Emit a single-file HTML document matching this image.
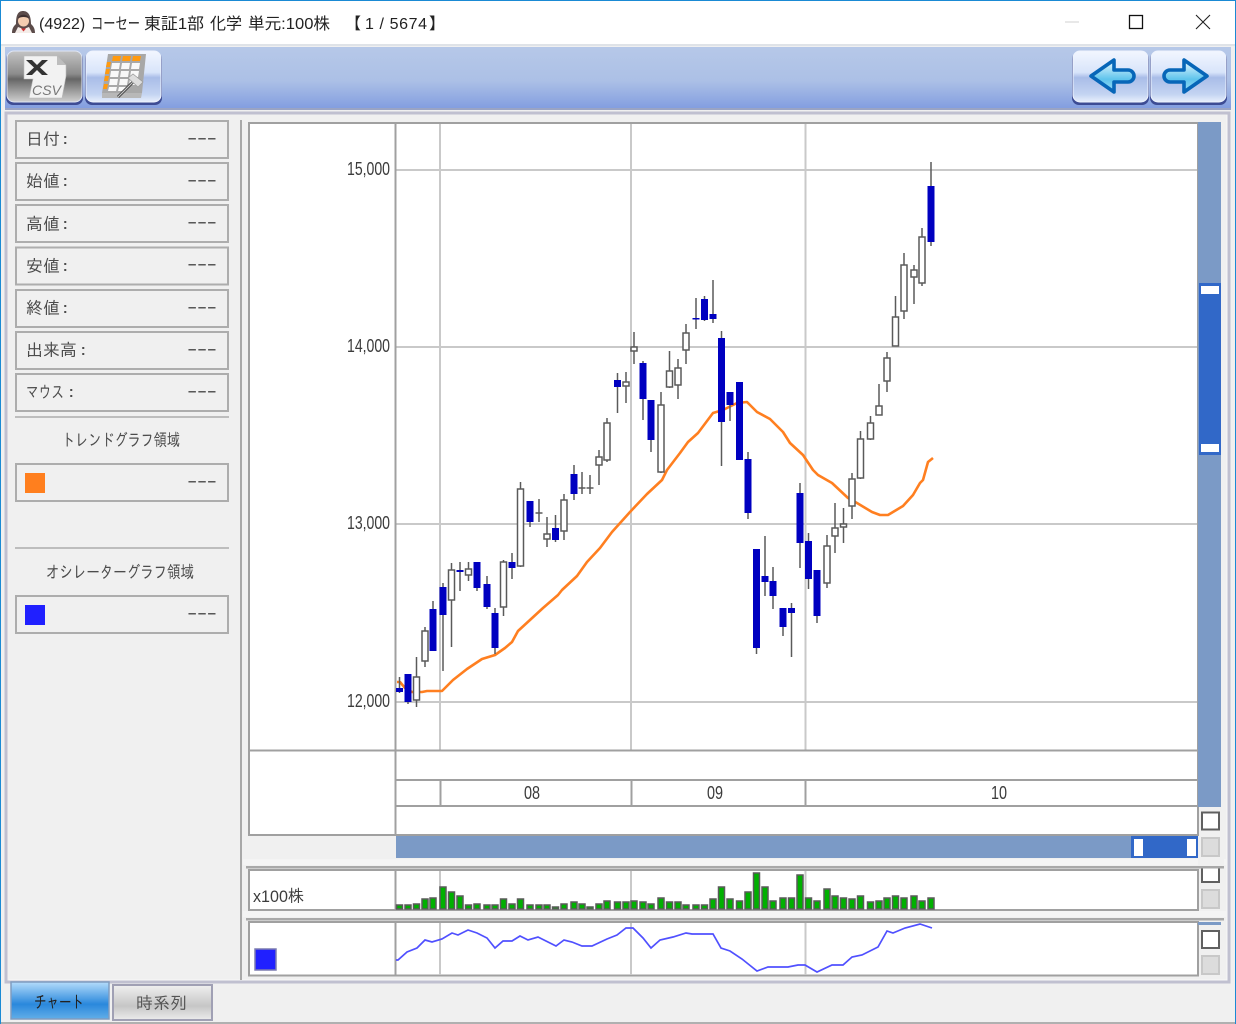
<!DOCTYPE html>
<html lang="ja"><head><meta charset="utf-8"><title>(4922) コーセー</title>
<style>html,body{margin:0;padding:0;background:#f0f0f0}svg{display:block;filter:blur(.35px)}
text{font-family:"Liberation Sans","IPAGothic","Noto Sans CJK JP",sans-serif}
.t{font-family:"Liberation Sans","Noto Sans CJK JP",sans-serif;font-size:16px;fill:#222}
.j{font-family:"IPAGothic","Noto Sans CJK JP",sans-serif;font-size:17px;fill:#4c4c4c}
.d{font-family:"Liberation Sans",sans-serif;font-size:15px;font-weight:bold;fill:#555}
.n{font-size:18px;fill:#3c3c3c}
.row{fill:#f0f0f0;stroke:#adadad;stroke-width:2}
</style></head><body>
<svg xmlns="http://www.w3.org/2000/svg" width="1236" height="1024" viewBox="0 0 1236 1024">
<defs>
<linearGradient id="tb" x1="0" y1="0" x2="0" y2="1"><stop offset="0" stop-color="#b6c8e8"/><stop offset=".55" stop-color="#acc0e6"/><stop offset="1" stop-color="#839ee0"/></linearGradient>
<linearGradient id="gb" x1="0" y1="0" x2="0" y2="1"><stop offset="0" stop-color="#c4c4c4"/><stop offset=".45" stop-color="#8c8c8c"/><stop offset=".55" stop-color="#666"/><stop offset="1" stop-color="#cfcfcf"/></linearGradient>
<linearGradient id="bb" x1="0" y1="0" x2="0" y2="1"><stop offset="0" stop-color="#f2f6ff"/><stop offset=".42" stop-color="#d8e4fa"/><stop offset=".52" stop-color="#a9bde8"/><stop offset=".85" stop-color="#c4d4f2"/><stop offset="1" stop-color="#e8effc"/></linearGradient>
<linearGradient id="ar" x1="0" y1="0" x2="0" y2="1"><stop offset="0" stop-color="#eefaff"/><stop offset=".6" stop-color="#5fc4ec"/><stop offset="1" stop-color="#9adcf5"/></linearGradient>
<linearGradient id="t1" x1="0" y1="0" x2="0" y2="1"><stop offset="0" stop-color="#b4dcfb"/><stop offset=".6" stop-color="#2a88dc"/><stop offset="1" stop-color="#62aee8"/></linearGradient>
<linearGradient id="t2" x1="0" y1="0" x2="0" y2="1"><stop offset="0" stop-color="#f0f0f0"/><stop offset=".6" stop-color="#c6c6c6"/><stop offset="1" stop-color="#ececec"/></linearGradient>
</defs>

<!-- window -->
<rect width="1236" height="1024" fill="#f0f0f0"/>
<rect x="0" y="0" width="1236" height="44" fill="#fff"/>
<rect x="0" y="44" width="1236" height="2" fill="#dfe3e8"/>
<rect x="0" y="0" width="1236" height="1" fill="#1a8ad4"/>
<rect x="0" y="0" width="1" height="1024" fill="#1a8ad4"/>
<rect x="1235" y="0" width="1" height="1024" fill="#1a8ad4"/>
<rect x="1" y="1022" width="1234" height="2" fill="#b0b0b0"/>

<!-- mascot icon -->
<path d="M12 33c0-5 2-7 4-9 0-9 2-13 7-13s8 4 8 13c2 2 4 4 4 9z" fill="#5c4c4a"/>
<ellipse cx="23.500" cy="21" rx="5.500" ry="5.500" fill="#f4cdb0"/>
<path d="M18 18.500c1-5 10-5 11 0-3-2-8-2-11 0z" fill="#3e3030"/>
<path d="M15 33l3-6 5.500 2 5.500-2 3 6z" fill="#f4ece8"/><path d="M21 28.500l2.500 3 2.500-3z" fill="#d03030"/>

<!-- title -->
<text class="t" x="39" y="29">(4922)</text>
<text class="t" x="91" y="29" textLength="49" lengthAdjust="spacingAndGlyphs">コーセー</text>
<text class="t" x="144" y="29" textLength="60" lengthAdjust="spacingAndGlyphs">東証1部</text>
<text class="t" x="210" y="29">化学</text>
<text class="t" x="248" y="29" textLength="82" lengthAdjust="spacingAndGlyphs">単元:100株</text>
<text class="t" x="345" y="29">【</text>
<text class="t" x="365" y="29" textLength="62">1 / 5674</text>
<text class="t" x="429" y="29">】</text>

<!-- window controls -->
<path d="M1065 22h14" stroke="#d0d0d0" stroke-width="1"/>
<rect x="1129.500" y="15.500" width="13" height="13" fill="none" stroke="#111" stroke-width="1.300"/>
<path d="M1196 15l14 14M1210 15l-14 14" stroke="#222" stroke-width="1.100"/>

<!-- toolbar -->
<rect x="5" y="47" width="1226" height="61" fill="url(#tb)"/>
<rect x="5" y="108" width="1226" height="2" fill="#9aa4c4"/>
<rect x="6" y="52" width="77" height="53" rx="7" fill="#3d4c94"/>
<rect x="7" y="51" width="75" height="51" rx="7" fill="url(#gb)" stroke="#dfe6f5"/>
<rect x="85" y="52" width="77" height="53" rx="7" fill="#3d4c94"/>
<rect x="86" y="51" width="75" height="51" rx="7" fill="url(#bb)" stroke="#eef3fd"/>
<rect x="1072" y="52" width="77" height="53" rx="7" fill="#3d4c94"/>
<rect x="1073" y="51" width="75" height="51" rx="7" fill="url(#bb)" stroke="#eef3fd"/>
<rect x="1150" y="52" width="77" height="53" rx="7" fill="#3d4c94"/>
<rect x="1151" y="51" width="75" height="51" rx="7" fill="url(#bb)" stroke="#eef3fd"/>

<!-- CSV icon -->
<path d="M24 56h33l9 9v11l-4 22H29l4-19h-9z" fill="#f2f2f2" stroke="#bbb" stroke-width=".6"/>
<path d="M57 56v9h9z" fill="#bdbdbd"/>
<path d="M26 60h6l5 5 5-5h6l-8 7.500 8 7.500h-6l-5-5-5 5h-6l8-7.500z" fill="#333"/>
<text x="32" y="95" font-size="14" font-style="italic" fill="#777" textLength="29">CSV</text>

<!-- table icon -->
<path d="M108 54h38l-4 39h-40z" fill="#a8a8a8"/>
<path d="M102 93h40l-1 5h-39z" fill="#b8b8b8"/>
<g fill="#ff9a10"><path d="M113 56h8l-1 5h-8zM123 56h8l-1 5h-8zM133 56h8l-1 5h-8z"/><path d="M107 62h4l-1 5h-4zM106 69h4l-1 5h-4zM105 76h4l-1 5h-4zM104 84h4l-1 5h-4z"/></g>
<g fill="#f8f8f8"><path d="M112 63h8l-1 6h-8zM122 63h8l-1 6h-8zM132 63h8l-1 6h-8zM111 71h8l-1 6h-8zM121 71h8l-1 6h-8zM131 71h8l-1 6h-8zM110 79h8l-1 6h-8zM120 79h8l-1 6h-8zM130 79h7l-1 6h-7zM109 87h8l-1 4h-8zM119 87h8l-1 4h-8z"/></g>
<path d="M118 97l15-15" stroke="#444" stroke-width="3"/><path d="M118 97l15-15" stroke="#ccc" stroke-width="1"/>
<path d="M128 78l5-4 10 8-5 5z" fill="#ddd" stroke="#999" stroke-width=".7"/>

<!-- nav arrows -->
<path d="M1091 76l23-16v10h14a6 6 0 0 1 0 12h-14v10z" fill="url(#ar)" stroke="#0766b8" stroke-width="3.600" stroke-linejoin="round"/>
<path d="M1207 76l-23-16v10h-14a6 6 0 0 0 0 12h14v10z" fill="url(#ar)" stroke="#0766b8" stroke-width="3.600" stroke-linejoin="round"/>

<!-- frames -->
<path d="M6 113H1229V982H6z" fill="#f0f0f0" stroke="#c0c0d0" stroke-width="3"/>
<rect x="9" y="116" width="1218" height="864" fill="#f0f0f0"/>
<path d="M1227 115V980H9" fill="none" stroke="#f8f8f8" stroke-width="1"/>
<rect x="240" y="120" width="2" height="860" fill="#a8a8a8"/>

<!-- left panel -->
<rect class="row" x="16" y="121" width="212" height="37"/>
<rect class="row" x="16" y="163" width="212" height="37"/>
<rect class="row" x="16" y="205" width="212" height="37"/>
<rect class="row" x="16" y="247.500" width="212" height="37"/>
<rect class="row" x="16" y="290" width="212" height="37"/>
<rect class="row" x="16" y="332" width="212" height="37"/>
<rect class="row" x="16" y="374" width="212" height="37"/>
<text class="j" x="26" y="145">日付<tspan dx="1">:</tspan></text>
<text class="j" x="26" y="187">始値<tspan dx="1">:</tspan></text>
<text class="j" x="26" y="230">高値<tspan dx="1">:</tspan></text>
<text class="j" x="26" y="272">安値<tspan dx="1">:</tspan></text>
<text class="j" x="26" y="314">終値<tspan dx="1">:</tspan></text>
<text class="j" x="26" y="356">出来高<tspan dx="2">:</tspan></text>
<text class="j" x="26" y="398" textLength="38" lengthAdjust="spacingAndGlyphs">マウス</text><text class="j" x="67" y="398">:</text>
<text class="d" x="188" y="143" textLength="28">–––</text>
<text class="d" x="188" y="185" textLength="28">–––</text>
<text class="d" x="188" y="227" textLength="28">–––</text>
<text class="d" x="188" y="269" textLength="28">–––</text>
<text class="d" x="188" y="312" textLength="28">–––</text>
<text class="d" x="188" y="354" textLength="28">–––</text>
<text class="d" x="188" y="396" textLength="28">–––</text>
<rect x="15" y="416" width="214" height="2" fill="#bdbdbd"/>
<text class="j" x="62" y="446" textLength="118" lengthAdjust="spacingAndGlyphs">トレンドグラフ領域</text>
<rect class="row" x="16" y="464" width="212" height="37"/>
<rect x="25" y="473" width="20" height="20" fill="#ff7f1e"/>
<text class="d" x="188" y="486" textLength="28">–––</text>
<rect x="15" y="547" width="214" height="2" fill="#bdbdbd"/>
<text class="j" x="46" y="578" textLength="148" lengthAdjust="spacingAndGlyphs">オシレーターグラフ領域</text>
<rect class="row" x="16" y="596" width="212" height="37"/>
<rect x="25" y="605" width="20" height="20" fill="#2020ff"/>
<text class="d" x="188" y="618" textLength="28">–––</text>

<!-- main chart -->
<rect x="249" y="123" width="949" height="712" fill="#fff" stroke="#a0a0a0" stroke-width="2"/>
<g stroke="#c9c9c9" stroke-width="2" fill="none">
<path d="M396 170H1197M396 347H1197M396 524H1197M396 702H1197"/>
<path d="M440 124V750M631 124V750M805.500 124V750"/>
</g>
<g stroke="#a0a0a0" stroke-width="2" fill="none">
<path d="M395.500 123V835"/>
<path d="M249 750.500H1197M395 780H1197M395 806H1197"/>
<path d="M440.500 780V806M631.500 780V806M805.500 780V806"/>
</g>
<text class="n" x="347" y="175" textLength="43" lengthAdjust="spacingAndGlyphs">15,000</text>
<text class="n" x="347" y="352" textLength="43" lengthAdjust="spacingAndGlyphs">14,000</text>
<text class="n" x="347" y="529" textLength="43" lengthAdjust="spacingAndGlyphs">13,000</text>
<text class="n" x="347" y="707" textLength="43" lengthAdjust="spacingAndGlyphs">12,000</text>
<text class="n" x="524" y="799" textLength="16" lengthAdjust="spacingAndGlyphs">08</text>
<text class="n" x="707" y="799" textLength="16" lengthAdjust="spacingAndGlyphs">09</text>
<text class="n" x="991" y="799" textLength="16" lengthAdjust="spacingAndGlyphs">10</text>

<!-- moving average -->
<polyline fill="none" stroke="#ff7f20" stroke-width="2.600" stroke-linejoin="round" points="397,682 400,682 405,688 412,692 422,692 427,691 442,691 453,680 467,669 482,659 495,655 505,648 512,642 518,631 543,608 558,595 562,590 577,576 587,562 600,548 612,532 630,512 647,494 662,480 667,470 680,453 688,442 698,433 713,413 723,410 737,403 747,402 757,412 770,419 783,432 790,443 803,455 813,470 818,475 832,483 848,498 857,503 872,512 880,515 888,515 903,506 913,495 920,483 923,480 928,462 933,458"/>

<!-- wicks -->
<path fill="none" stroke="#5a5a5a" stroke-width="1.500" d="M399.500 677V693M408 674V704M416.500 657V707M425 627V667M433 601V651M443 583V671M451.500 563V647M460 562V591M468.500 562V581M477 562V591M487 576V609M495 608V654M503.500 560V616M512 553V579M520.500 482V567M530 501V527M539 499V522M547 517V547M555.500 515V542M564 494V540M574 465V500M582 472V494M590 475V494M599 450V485M607 418V462M617.500 373V413M626 372V403M634 332V364M643 361V420M651 400V452M661 392V473M669.500 351V388M678 359V399M686 324V364M696 298V329M704.500 296V321M713 280V323M721.500 331V466M730 392V421M739.500 382V460M748 452V519M756.500 549V654M765 536V596M773 567V609M783 608V636M791.500 603V657M800 483V568M808.500 533V589M817 570V623M827 535V588M835 503V553M843.500 508V543M852 473V519M860.500 431V479M870.500 416V440M879 384V415M887 352V392M895.500 296V346M904 253V319M914 265V304M922 228V286M931 162V246"/>
<path fill="none" stroke="#5a5a5a" stroke-width="1.500" d="M535.500 513h7M578.500 488h7M586.500 488h7"/>

<!-- white bodies -->
<path fill="#fff" stroke="#5a5a5a" stroke-width="1.500" d="M413.500 677h6v23h-6zM422 631h6v30h-6zM448.500 570h6v30h-6zM465.500 569h6v6h-6zM500.500 562h6v45h-6zM517.500 489h6v77h-6zM544 534h6v5h-6zM561 500h6v31h-6zM596 457h6v8h-6zM604 423h6v37h-6zM623 382h6v4h-6zM631 347h6v4h-6zM658 405h6v67h-6zM666.500 371h6v16h-6zM675 368h6v17h-6zM683 333h6v17h-6zM824 546h6v37h-6zM832 528h6v8h-6zM840.500 524h6v3h-6zM849 479h6v27h-6zM857.500 439h6v39h-6zM867.500 423h6v16h-6zM876 406h6v9h-6zM884 358h6v23h-6zM892.500 317h6v29h-6zM901 265h6v46h-6zM911 270h6v7h-6zM919 237h6v46h-6z"/>

<!-- blue bodies -->
<path fill="#0000c0" d="M396 688h7v4h-7zM404.500 674h7v28h-7zM429.500 609h7v42h-7zM439.500 587h7v28h-7zM456.500 570h7v2h-7zM473.500 562h7v26h-7zM483.500 584h7v23h-7zM491.500 613h7v35h-7zM508.500 562h7v6h-7zM526.500 501h7v21h-7zM552 528h7v12h-7zM570.500 474h7v20h-7zM614 380h7v7h-7zM639.500 363h7v36h-7zM647.500 400h7v40h-7zM692.500 318h7v1.500h-7zM701 299h7v21h-7zM709.500 314h7v5h-7zM718 338h7v84h-7zM726.500 392h7v13h-7zM736 382h7v78h-7zM744.500 459h7v54h-7zM753 549h7v99h-7zM761.500 576h7v6h-7zM769.500 581h7v15h-7zM779.500 608h7v19h-7zM788 608h7v5h-7zM796.500 493h7v50h-7zM805 541h7v38h-7zM813.500 570h7v46h-7zM927.500 186h7v56h-7z"/>

<!-- right scrollbar -->
<rect x="1198" y="122" width="23" height="685" fill="#7b9ac6"/>
<rect x="1199" y="283" width="22" height="172" fill="#3168c8"/>
<rect x="1201" y="286" width="18" height="8" fill="#fff"/>
<rect x="1201" y="444" width="18" height="8" fill="#fff"/>
<rect x="1202" y="812.500" width="17" height="17" fill="#fff" stroke="#606060" stroke-width="2"/>
<rect x="1202" y="838" width="17" height="18" fill="#dcdcdc" stroke="#c8c8c8" stroke-width="2"/>

<!-- bottom scrollbar -->
<rect x="396" y="836" width="802" height="22" fill="#7b9ac6"/>
<rect x="1131" y="836" width="67" height="22" fill="#3168c8"/>
<rect x="1134" y="839" width="9" height="17" fill="#fff"/>
<rect x="1187" y="839" width="9" height="17" fill="#fff"/>

<!-- volume -->
<rect x="243" y="859" width="984" height="6" fill="#f4f4f4"/>
<rect x="246" y="866" width="978" height="2.500" fill="#a8a8a8"/>
<rect x="249" y="870" width="949" height="40" fill="#fff" stroke="#a0a0a0" stroke-width="2"/>
<path d="M395.500 870V910" stroke="#a0a0a0" stroke-width="2"/>
<path d="M440 871V909M631 871V909M805.500 871V909" stroke="#c9c9c9" stroke-width="2"/>
<text x="253" y="902" font-size="17" fill="#3c3c3c" textLength="51" lengthAdjust="spacingAndGlyphs" style="font-family:'Liberation Sans','IPAGothic',sans-serif">x100株</text>
<path fill="#00b000" stroke="#5a5a5a" stroke-width="1.500" d="M396.500 909V905h6v4zM405 909V905h6v4zM413.500 909V904h6v5zM422 909V899h6v10zM430 909V898h6v11zM440 909V887h6v22zM448.500 909V892h6v17zM457 909V896h6v13zM465.500 909V905h6v4zM474 909V904h6v5zM484 909V905h6v4zM492 909V905h6v4zM500.500 909V899h6v10zM509 909V904h6v5zM517.500 909V899h6v10zM527 909V905h6v4zM536 909V905h6v4zM544 909V905h6v4zM552.500 909V907h6v2zM561 909V904h6v5zM571 909V902h6v7zM579 909V904h6v5zM587 909V907h6v2zM596 909V904h6v5zM604 909V901h6v8zM614.500 909V902h6v7zM623 909V902h6v7zM631 909V901h6v8zM640 909V902h6v7zM648 909V904h6v5zM658 909V898h6v11zM666.500 909V902h6v7zM675 909V902h6v7zM683 909V905h6v4zM693 909V905h6v4zM701.500 909V905h6v4zM710 909V899h6v10zM718.500 909V887h6v22zM727 909V899h6v10zM736.500 909V901h6v8zM745 909V892h6v17zM753.500 909V873h6v36zM762 909V887h6v22zM770 909V901h6v8zM780 909V898h6v11zM788.500 909V898h6v11zM797 909V875h6v34zM805.500 909V898h6v11zM814 909V901h6v8zM824 909V889h6v20zM832 909V896h6v13zM840.500 909V898h6v11zM849 909V899h6v10zM857.500 909V896h6v13zM867.500 909V902h6v7zM876 909V901h6v8zM884 909V898h6v11zM892.500 909V896h6v13zM901 909V898h6v11zM911 909V896h6v13zM919 909V901h6v8zM928 909V898h6v11z"/>
<rect x="1202" y="866" width="17" height="16" fill="#fff" stroke="#606060" stroke-width="2"/>
<rect x="1198" y="859" width="26" height="7" fill="#f0f0f0"/>
<rect x="1198" y="866" width="26" height="2.500" fill="#a8a8a8"/>
<rect x="1202" y="890" width="17" height="18" fill="#dcdcdc" stroke="#c8c8c8" stroke-width="2"/>

<!-- oscillator -->
<rect x="243" y="911" width="984" height="6" fill="#f4f4f4"/>
<rect x="246" y="918" width="978" height="2.500" fill="#a8a8a8"/>
<rect x="249" y="922" width="949" height="53.500" fill="#fff" stroke="#a0a0a0" stroke-width="2"/>
<path d="M395.500 922V976" stroke="#a0a0a0" stroke-width="2"/>
<path d="M440 923V975M631 923V975M805.500 923V975" stroke="#c9c9c9" stroke-width="2"/>
<rect x="255" y="949" width="21" height="21" fill="#2020ff" stroke="#7c7cb0" stroke-width="1.500"/>
<polyline fill="none" stroke="#5050ff" stroke-width="1.700" points="396,960 398,960 407,952 417,948 425,940 432,942 442,939 452,933 458,935 468,930 477,933 487,938 495,948 503,941 512,941 520,936 528,940 538,937 556,946 564,940 572,942 582,946 592,946 607,939 617,935 626,928 633,928 643,938 651,948 660,940 673,937 686,933 692,934 713,934 721,948 730,951 742,959 757,971 768,967 788,967 798,965 805,965 817,972 832,965 843,965 852,957 862,955 878,947 887,931 893,933 905,928 920,924 932,928"/>
<rect x="1198" y="922" width="23" height="3" fill="#7b9ac6"/>
<rect x="1202" y="931" width="17" height="17" fill="#fff" stroke="#606060" stroke-width="2"/>
<rect x="1202" y="956" width="17" height="18" fill="#dcdcdc" stroke="#c8c8c8" stroke-width="2"/>

<!-- tabs -->
<rect x="113" y="985" width="99" height="35" fill="url(#t2)" stroke="#a0a0b4" stroke-width="2"/>
<rect x="11" y="982" width="98" height="37" fill="url(#t1)" stroke="#7f9cc0" stroke-width="1.500"/>
<text x="34" y="1008" font-size="17" fill="#222" textLength="50" lengthAdjust="spacingAndGlyphs" style="font-family:'IPAGothic','Noto Sans CJK JP',sans-serif">チャート</text>
<text x="136" y="1009" font-size="17" fill="#555" style="font-family:'IPAGothic','Noto Sans CJK JP',sans-serif">時系列</text>
</svg>
</body></html>
